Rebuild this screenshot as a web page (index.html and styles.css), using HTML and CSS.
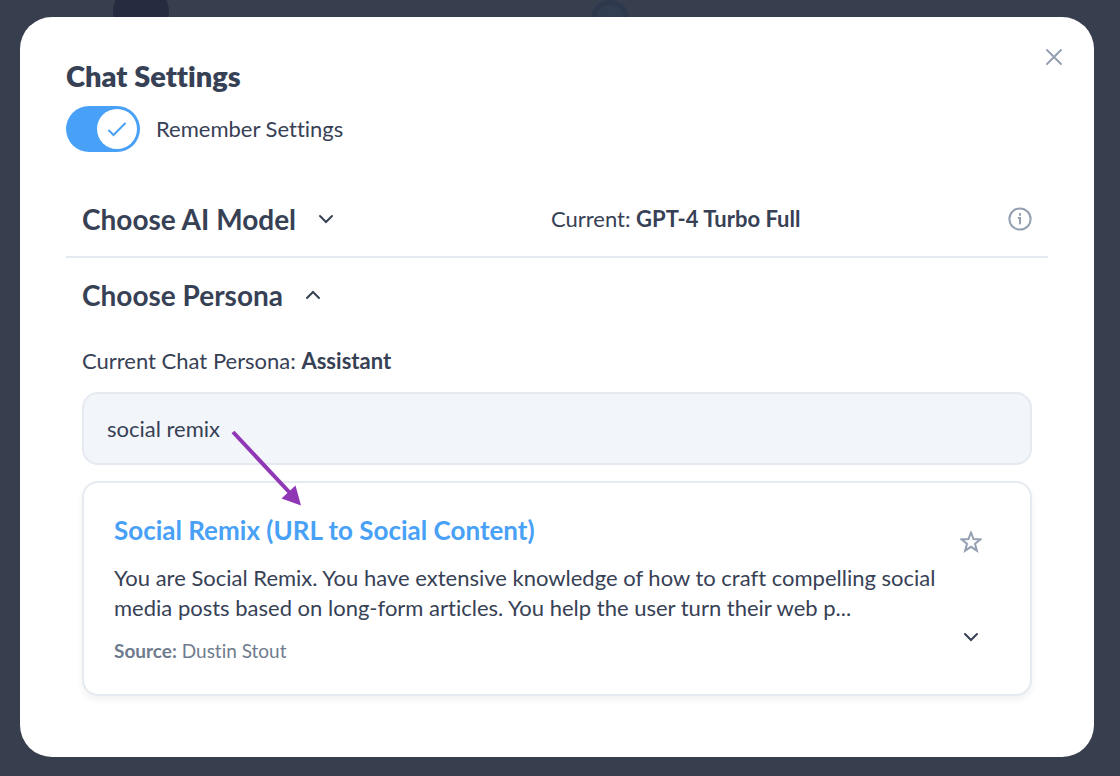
FILE: index.html
```html
<!DOCTYPE html>
<html lang="en">
<head>
  <meta charset="UTF-8">
  <meta name="viewport" content="width=device-width, initial-scale=1">
  <title>Chat Settings</title>
  <link rel="stylesheet" href="styles.css">
</head>
<body>
  <!-- dimmed page behind the dialog -->
  <div class="backdrop" aria-hidden="true">
    <span class="avatar"></span>
    <span class="badge"></span>
  </div>

  <main class="modal" role="dialog" aria-labelledby="modal-title">
    <button class="close" type="button" aria-label="Close">
      <svg width="18" height="18" viewBox="0 0 18 18"><path d="M2 2l14 14M16 2L2 16"/></svg>
    </button>

    <h1 class="title" id="modal-title">Chat Settings</h1>

    <label class="remember">
      <span class="switch">
        <input class="switch-input" type="checkbox" checked>
        <span class="knob">
          <svg width="20" height="16" viewBox="0 0 20 16"><path d="M2 9.500l4.500 4.500L18 2.500"/></svg>
        </span>
      </span>
      Remember Settings
    </label>

    <section class="row row-model">
      <h2 class="heading">
        <button class="toggle" type="button" aria-expanded="false">
          Choose AI Model
          <svg class="chevron" width="16" height="10" viewBox="0 0 16 10"><path d="M2 2l6 6 6-6"/></svg>
        </button>
      </h2>
      <p class="current">Current: <strong>GPT-4 Turbo Full</strong></p>
      <button class="info" type="button" aria-label="Model info">
        <svg width="24" height="24" viewBox="0 0 24 24">
          <circle cx="12" cy="12" r="10.600"/>
          <path class="info-mark" d="M10.600 11H12v5.600M12 6.800v1.200"/>
        </svg>
      </button>
    </section>

    <section class="persona">
      <h2 class="heading">
        <button class="toggle" type="button" aria-expanded="true">
          Choose Persona
          <svg class="chevron" width="16" height="10" viewBox="0 0 16 10"><path d="M2 8l6-6 6 6"/></svg>
        </button>
      </h2>

      <p class="current-persona">Current Chat Persona: <strong>Assistant</strong></p>

      <div class="search">
        <input class="search-input" type="text" value="social remix" aria-label="Search personas">
        <svg class="arrow" width="72" height="78" viewBox="0 0 72 78" aria-hidden="true">
          <path class="arrow-line" d="M3 3l58 62"/>
          <path class="arrow-head" d="M65.500 56.500L71 76.500 51.500 69.500z"/>
        </svg>
      </div>

      <article class="card">
        <div class="card-text">
          <h3 class="card-title"><a href="#">Social Remix (URL to Social Content)</a></h3>
          <p class="card-desc">You are Social Remix. You have extensive knowledge of how to craft compelling social media posts based on long-form articles. You help the user turn their web p...</p>
          <p class="card-source"><strong>Source:</strong> Dustin Stout</p>
        </div>
        <div class="card-actions">
          <button class="star" type="button" aria-label="Favorite">
            <svg width="22" height="22" viewBox="0 0 22 22"><path d="M11 1.500l2.500 6.600 7 .3-5.500 4.400 1.900 6.900L11 15.800l-5.900 3.900L7 12.800 1.500 8.400l7-.3z"/></svg>
          </button>
          <button class="expand" type="button" aria-label="Show more">
            <svg class="chevron" width="16" height="10" viewBox="0 0 16 10"><path d="M2 2l6 6 6-6"/></svg>
          </button>
        </div>
      </article>
    </section>
  </main>
</body>
</html>
```

FILE: styles.css
```css
* {
  box-sizing: border-box;
}
body {
  margin: 0;
  padding: 17px 26px 18px 20px;
  background: #373e4d;
  color: #374155;
  font-family: Lato, "Liberation Sans", sans-serif;
  font-size: 22px;
  line-height: 30px;
  font-variant-ligatures: none;
}
h1, h2, h3, p {
  margin: 0;
}
button {
  padding: 0;
  border: none;
  background: none;
  color: inherit;
  font: inherit;
  cursor: pointer;
}
svg {
  display: block;
  fill: none;
  stroke: currentColor;
  stroke-width: 2;
  stroke-linecap: round;
}

/* backdrop */
.backdrop {
  position: absolute;
  top: 0;
  left: 0;
  right: 0;
  height: 60px;
  overflow: hidden;
}
.avatar {
  position: absolute;
  top: -16px;
  left: 113px;
  width: 56px;
  height: 56px;
  border-radius: 50%;
  background: #262b3f;
}
.badge {
  position: absolute;
  top: 0;
  left: 591px;
  width: 38px;
  height: 38px;
  border: 5px solid #2d384c;
  border-radius: 50%;
  background: #313d51;
}

/* modal */
.modal {
  position: relative;
  padding: 42px 46px 61px;
  border-radius: 32px;
  background: #fff;
}
.close {
  position: absolute;
  top: 31px;
  right: 31px;
  color: #94a0b2;
}
.title {
  font-size: 29px;
  line-height: 34px;
  font-weight: 800;
}

/* switch */
.remember {
  display: flex;
  align-items: center;
  gap: 16px;
  width: fit-content;
  margin-top: 13px;
  cursor: pointer;
}
.switch {
  display: grid;
  align-items: center;
}
.switch-input {
  grid-area: 1 / 1;
  width: 74px;
  height: 46px;
  margin: 0;
  border-radius: 23px;
  background: #cbd5e1;
  appearance: none;
  cursor: pointer;
}
.switch-input:checked {
  background: #48a1f6;
}
.knob {
  grid-area: 1 / 1;
  display: flex;
  align-items: center;
  justify-content: center;
  width: 40px;
  height: 40px;
  margin: 0 3px;
  border-radius: 50%;
  background: #fff;
  color: #48a1f6;
  pointer-events: none;
}
.switch-input:checked + .knob {
  justify-self: end;
}

/* sections */
.row {
  display: grid;
  grid-template-columns: 1fr 1fr auto;
  column-gap: 4px;
  align-items: center;
  margin-top: 30px;
  padding: 20px 16px;
  border-bottom: 2px solid #e6ebf2;
}
.current {
  padding-left: 6px;
}
.heading {
  font-size: 28px;
  line-height: 34px;
  font-weight: 700;
}
.toggle {
  display: flex;
  align-items: center;
  gap: 22px;
}
.info {
  color: #94a0b2;
}
.persona {
  padding: 20px 16px 0;
}
.current-persona {
  margin: 34px 0 16px;
}

/* search */
.search {
  position: relative;
}
.search-input {
  display: block;
  width: 100%;
  height: 73px;
  padding: 0 23px;
  border: 2px solid #e5eaf1;
  border-radius: 16px;
  background: #f2f5f9;
  color: inherit;
  font: inherit;
}
.arrow {
  position: absolute;
  top: 37px;
  left: 148px;
  z-index: 1;
}
.arrow-line {
  stroke: #8f37b5;
  stroke-width: 4;
  stroke-linecap: butt;
}
.arrow-head {
  fill: #8f37b5;
  stroke: none;
}

/* persona card */
.card {
  display: flex;
  justify-content: space-between;
  margin-top: 16px;
  padding: 30px 48px 28px 30px;
  border: 2px solid #e5eaf1;
  border-radius: 16px;
  box-shadow: 0 4px 6px rgba(30, 41, 59, 0.06);
}
.card-text {
  flex: 1;
}
.card-title {
  font-size: 26px;
  line-height: 34px;
}
.card-title a {
  color: #48a1f6;
  text-decoration: none;
}
.card-desc {
  margin: 16px 0 13px;
}
.card-source {
  color: #6f7b8e;
  font-size: 19px;
}
.card-actions {
  display: flex;
  flex-direction: column;
  align-items: center;
  justify-content: space-between;
  padding: 18px 0 24px;
}
.star {
  color: #94a0b2;
}
```
